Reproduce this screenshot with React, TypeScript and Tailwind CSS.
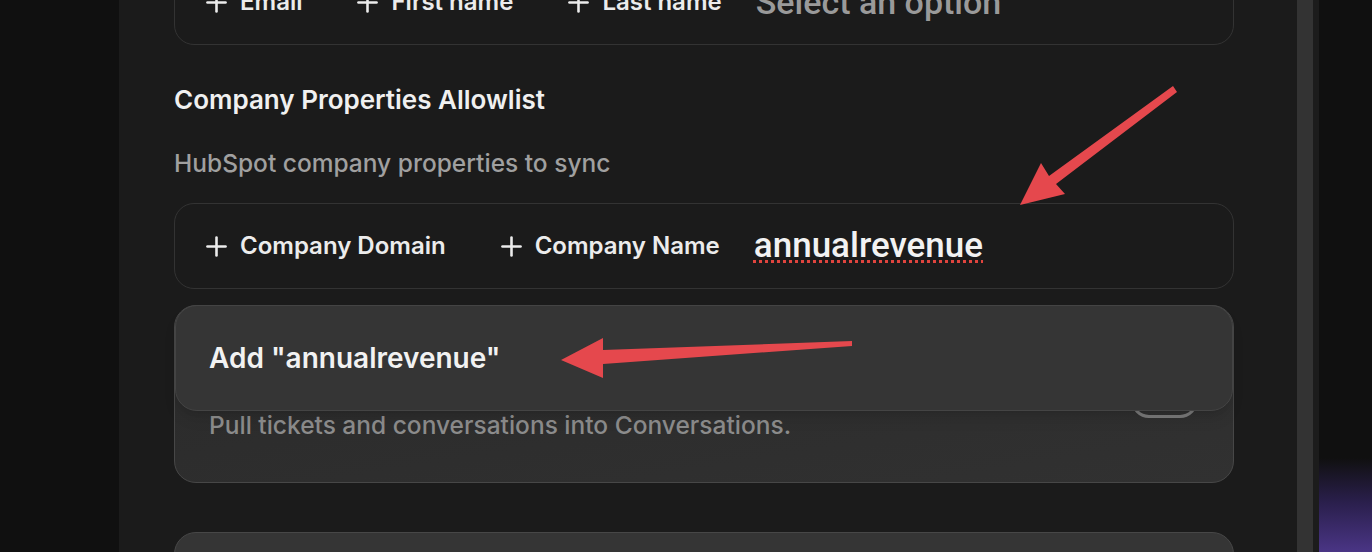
import { Plus } from 'lucide-react';

const uiFont = { fontFamily: 'Inter, "Noto Sans", sans-serif' };
const inputFont = { fontFamily: 'Roboto, "Noto Sans", sans-serif' };

function Chip({ label }: { label: string }) {
  return (
    <div className="flex items-center gap-[8px] text-[24px] font-semibold text-[#ececec]" style={uiFont}>
      <Plus size={31} strokeWidth={2} />
      <span>{label}</span>
    </div>
  );
}

function Arrows() {
  return (
    <svg className="pointer-events-none absolute inset-0" width="1372" height="552" viewBox="0 0 1372 552">
      {/* arrow to the input */}
      <polygon
        fill="#e5484d"
        points="1173,86 1177,92 1056,184 1065,194 1020,205 1041,163 1049,176"
        strokeLinejoin="round"
      />
      {/* arrow to the dropdown option */}
      <polygon
        fill="#e5484d"
        points="852,341 852,346 603,364 603,378 561,360 603,338 603,350"
        strokeLinejoin="round"
      />
    </svg>
  );
}

export default function App() {
  return (
    <div className="relative flex h-[552px] w-[1372px] overflow-hidden bg-[#101010]">
      <div className="w-[119px] shrink-0" />

      <div className="w-[1178px] shrink-0 bg-[#1b1b1b] pl-[55px] pr-[63px]">
        {/* contact properties box (scrolled) */}
        <div className="-mt-[41px] flex h-[86px] items-center gap-[34px] rounded-[20px] border border-[#333333] pl-[26px]">
          <div className="flex gap-[50px]">
            <Chip label="Email" />
            <Chip label="First name" />
            <Chip label="Last name" />
          </div>
          <span className="text-[34px] font-medium text-[#9a9a9a]" style={inputFont}>
            Select an option
          </span>
        </div>

        <h3 className="mt-[40px] text-[26px] leading-[30px] font-semibold text-[#f0f0f0]" style={uiFont}>
          Company Properties Allowlist
        </h3>
        <p className="mt-[34px] text-[24.5px] leading-[28px] font-medium text-[#a0a0a0]" style={uiFont}>
          HubSpot company properties to sync
        </p>

        <div className="mt-[26px] flex h-[86px] items-center gap-[34px] rounded-[20px] border border-[#333333] pl-[26px]">
          <div className="flex gap-[50px]">
            <Chip label="Company Domain" />
            <Chip label="Company Name" />
          </div>
          <span
            className="text-[35px] font-medium text-[#f2f2f2] underline decoration-[#e0443e] decoration-dotted decoration-[3px] underline-offset-[3px]"
            style={inputFont}
          >
            annualrevenue
          </span>
        </div>

        <div className="relative mt-[16px]">
          <div className="flex h-[178px] items-center justify-between rounded-[22px] border border-[#474747] bg-gradient-to-br from-[#2a2a2a] to-[#313131] pl-[34px] pr-[35px]">
            <p className="pt-[62px] text-[24.5px] font-medium text-[#8c8c8c]" style={uiFont}>
              Pull tickets and conversations into Conversations.
            </p>
            <div className="mt-[12px] h-[36px] w-[67px] rounded-full border-[3px] border-[#7a7a7a]" />
          </div>

          <div className="absolute inset-x-[1px] top-0 flex h-[106px] items-center rounded-[22px] border border-[#444444] bg-[#353535] px-[33px] shadow-lg">
            <span className="text-[28px] font-semibold text-[#f2f2f2]" style={uiFont}>
              Add "annualrevenue"
            </span>
          </div>
        </div>

        <div className="mt-[49px] h-[120px] rounded-[22px] border border-[#474747] bg-[#353535]" />
      </div>

      <div className="w-[16px] shrink-0 bg-[#333333]" />
      <div className="w-[6px] shrink-0 bg-[#1c1c1c]" />
      <div className="flex-1 bg-[linear-gradient(to_bottom,#101010_83%,#2a1f4c_91%,#4a3585_100%)]" />

      <Arrows />
    </div>
  );
}
